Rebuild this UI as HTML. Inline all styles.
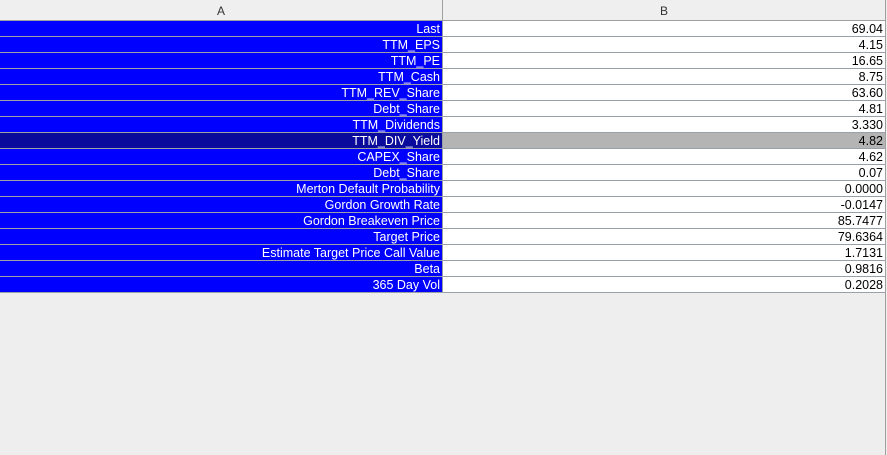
<!DOCTYPE html><html><head><style>
body{margin:0;width:887px;height:455px;background:#eeeeee;position:relative;overflow:hidden;font-family:"Liberation Sans",Arial,sans-serif;font-size:12.5px}
.h{position:absolute;top:0;height:21px;background:#efefef;border-bottom:1px solid #a0a0a0;text-align:center;line-height:22px;color:#333;box-sizing:border-box;font-size:12px}
#t{position:absolute;top:21px;left:0;width:886px}
.r{height:16px;display:flex}
.r div{box-sizing:border-box;height:16px;width:443px;padding:1px 2px 0 0;text-align:right;line-height:15px;border-bottom:1px solid #9aa0a8;border-right:1px solid #9aa0a8;white-space:nowrap;overflow:hidden}
.r .a{background:#0000ff;color:#fff}
.r .b{background:#fff;color:#000}
.s .a{background:#0a0a9c}
.s .b{background:#b4b4b4}
</style></head><body>
<div class="h" style="left:0;width:443px;border-right:1px solid #a0a0a0">A</div>
<div class="h" style="left:443px;width:443px;border-right:1px solid #a0a0a0">B</div>
<div id="t">
<div class="r"><div class="a">Last</div><div class="b">69.04</div></div>
<div class="r"><div class="a">TTM_EPS</div><div class="b">4.15</div></div>
<div class="r"><div class="a">TTM_PE</div><div class="b">16.65</div></div>
<div class="r"><div class="a">TTM_Cash</div><div class="b">8.75</div></div>
<div class="r"><div class="a">TTM_REV_Share</div><div class="b">63.60</div></div>
<div class="r"><div class="a">Debt_Share</div><div class="b">4.81</div></div>
<div class="r"><div class="a">TTM_Dividends</div><div class="b">3.330</div></div>
<div class="r s"><div class="a">TTM_DIV_Yield</div><div class="b">4.82</div></div>
<div class="r"><div class="a">CAPEX_Share</div><div class="b">4.62</div></div>
<div class="r"><div class="a">Debt_Share</div><div class="b">0.07</div></div>
<div class="r"><div class="a">Merton Default Probability</div><div class="b">0.0000</div></div>
<div class="r"><div class="a">Gordon Growth Rate</div><div class="b">-0.0147</div></div>
<div class="r"><div class="a">Gordon Breakeven Price</div><div class="b">85.7477</div></div>
<div class="r"><div class="a">Target Price</div><div class="b">79.6364</div></div>
<div class="r"><div class="a">Estimate Target Price Call Value</div><div class="b">1.7131</div></div>
<div class="r"><div class="a">Beta</div><div class="b">0.9816</div></div>
<div class="r"><div class="a">365 Day Vol</div><div class="b">0.2028</div></div>
</div>
<div style="position:absolute;left:885px;top:0;width:1px;height:455px;background:#a0a0a0"></div>
</body></html>
